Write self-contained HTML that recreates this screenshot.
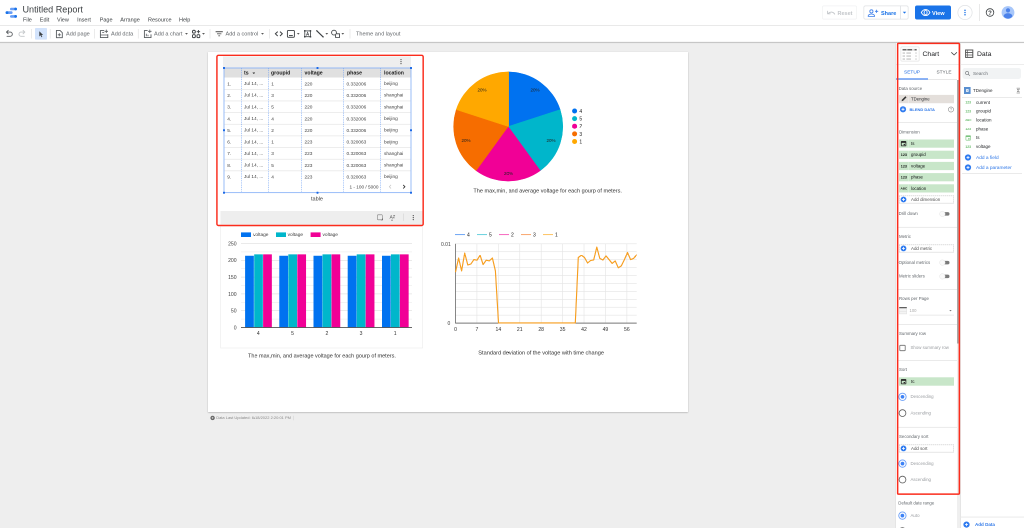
<!DOCTYPE html>
<html lang="en"><head><meta charset="utf-8"><title>Untitled Report</title>
<style>
html,body{margin:0;padding:0;}
body{width:1024px;height:528px;overflow:hidden;position:relative;background:#eeeeee;font-family:"Liberation Sans",Arial,sans-serif;}
.t{position:absolute;white-space:nowrap;line-height:20px;height:20px;}
.b{position:absolute;box-sizing:border-box;}
svg{position:absolute;overflow:visible;}
#app{position:absolute;left:0;top:0;width:2048px;height:1056px;overflow:hidden;transform:scale(0.5);transform-origin:0 0;will-change:transform;}
</style></head><body><div id="app">
<svg width="2048" height="1056" viewBox="0 0 1024 528" style="left:0;top:0">
<defs><linearGradient id="tbsh" x1="0" y1="0" x2="0" y2="1"><stop offset="0" stop-color="#b4b4b4"/><stop offset="1" stop-color="#dcdcdc"/></linearGradient><filter id="psh" x="-5%" y="-5%" width="110%" height="110%"><feGaussianBlur stdDeviation="0.8"/></filter></defs>
<rect x="0.00" y="0.00" width="1024.00" height="42.20" fill="#ffffff"/>
<rect x="0.00" y="25.20" width="1024.00" height="0.80" fill="#e4e4e4"/>
<rect x="0.00" y="41.90" width="1024.00" height="1.30" fill="url(#tbsh)"/>
<rect x="208.00" y="52.60" width="480.00" height="360.00" fill="#9a9a9a" filter="url(#psh)" opacity="0.75"/>
<rect x="208.00" y="52.00" width="480.00" height="360.00" fill="#ffffff"/>
<rect x="895.20" y="43.20" width="1.00" height="485.00" fill="#d9d9d9"/>
<rect x="895.80" y="43.20" width="64.70" height="485.00" fill="#ffffff"/>
<rect x="960.30" y="43.20" width="63.70" height="485.00" fill="#ffffff"/>
<rect x="960.20" y="43.20" width="0.80" height="485.00" fill="#dcdcdc"/>
<rect x="822.35" y="5.85" width="34.30" height="13.30" stroke="#f1f2f3" stroke-width="0.7" fill="#fff" rx="1.65"/>
<rect x="863.85" y="5.85" width="44.30" height="13.30" stroke="#dfe1e4" stroke-width="0.7" fill="#fff" rx="1.65"/>
<rect x="900.20" y="5.90" width="0.70" height="13.20" fill="#dadce0"/>
<rect x="915.00" y="5.50" width="36.00" height="14.00" fill="#1a73e8" rx="2.00"/>
<rect x="957.85" y="5.35" width="14.30" height="14.30" stroke="#e0e2e5" stroke-width="0.7" fill="#fff" rx="7.15"/>
<rect x="979.20" y="4.00" width="0.70" height="17.00" fill="#e0e0e0"/>
<g><g><rect x="10" y="7.7" width="7" height="2.6" rx="1.3" fill="#669df6"/><circle cx="15.6" cy="9" r="1.35" fill="#1a73e8"/><rect x="5.6" y="11.3" width="7" height="2.7" rx="1.35" fill="#669df6"/><circle cx="7" cy="12.65" r="1.4" fill="#1a73e8"/><rect x="10" y="15.1" width="7" height="2.6" rx="1.3" fill="#669df6"/><circle cx="15.6" cy="16.4" r="1.35" fill="#1a73e8"/></g><g fill="none" stroke="#585c60" stroke-width="0.9" stroke-linecap="round" stroke-linejoin="round"><path d="M7 36.3h3.2a2.1 2.1 0 0 0 0-4.2H6.6"/><path d="M8.2 30.4L6.5 32.1l1.7 1.7"/></g><g fill="none" stroke="#c4c7ca" stroke-width="0.9" stroke-linecap="round" stroke-linejoin="round"><path d="M24.3 36.3h-3.2a2.1 2.1 0 0 1 0-4.2h3.6"/><path d="M23.1 30.4l1.7 1.7-1.7 1.7"/></g><rect x="31.15" y="29" width="0.7" height="9.5" fill="#e3e3e3"/><rect x="49.85" y="29" width="0.7" height="9.5" fill="#e3e3e3"/><rect x="94.15" y="29" width="0.7" height="9.5" fill="#e3e3e3"/><rect x="137.95000000000002" y="29" width="0.7" height="9.5" fill="#e3e3e3"/><rect x="209.65" y="29" width="0.7" height="9.5" fill="#e3e3e3"/><rect x="269.15" y="29" width="0.7" height="9.5" fill="#e3e3e3"/><rect x="349.65" y="29" width="0.7" height="9.5" fill="#e3e3e3"/><rect x="35" y="28" width="12" height="11.6" rx="0.8" fill="#d2e3fc"/><path d="M39.3 31.2v5.3l1.3-1.2 0.9 2 0.8-0.4-0.9-1.9h1.7z" fill="#3c4043"/><g fill="none" stroke="#585c60" stroke-width="0.9" stroke-linejoin="round"><path d="M56.4 30.4h3.6l2.3 2.3v5h-5.9z"/><path d="M59.3 33.3v3M57.8 34.8h3" stroke-width="0.8"/></g><g fill="none" stroke="#585c60" stroke-width="0.9"><path d="M104.2 30.6h-3.8v7h7.4v-3.3"/><path d="M100.4 35h7.4M102.2 32.6h2" stroke-width="0.8"/><path d="M106.3 29.6v3.4M104.6 31.3h3.4" stroke-width="0.8"/></g><g fill="none" stroke="#585c60" stroke-width="0.9"><path d="M147.6 30.6h-3.2v7h6.6v-3.2"/><path d="M146.3 36.2v-2.4M148 36.2v-1.4" stroke-width="0.8"/><path d="M149.8 29.6v3.4M148.1 31.3h3.4" stroke-width="0.8"/></g><g fill="none" stroke="#3c4043" stroke-width="0.95"><circle cx="193.9" cy="31.7" r="1.45"/><rect x="192.5" y="34.7" width="2.8" height="2.9" rx="0.8"/><rect x="197" y="34.7" width="2.8" height="2.9" rx="0.8"/><path d="M198.4 30v3.4M196.7 31.7h3.4"/></g><g stroke="#5a5a5a" stroke-width="0.8"><path d="M215.6 31.7h7.2" stroke-width="1.1"/><path d="M217 33.8h4.4M218.3 35.8h1.8"/></g><path d="M185.1 33.1h2.8l-1.4 1.5z" fill="#444"/><path d="M202.1 33.1h2.8l-1.4 1.5z" fill="#444"/><path d="M261.1 33.1h2.8l-1.4 1.5z" fill="#444"/><path d="M296.90000000000003 33.1h2.8l-1.4 1.5z" fill="#444"/><path d="M325.40000000000003 33.1h2.8l-1.4 1.5z" fill="#444"/><path d="M341.40000000000003 33.1h2.8l-1.4 1.5z" fill="#444"/><g fill="none" stroke="#3c4043" stroke-width="1" stroke-linejoin="miter"><path d="M277.7 31.6l-2.3 2.2 2.3 2.2M280 31.6l2.3 2.2-2.3 2.2"/></g><g fill="none" stroke="#3c4043" stroke-width="0.9"><rect x="287.4" y="30.4" width="7" height="6.9" rx="1"/><path d="M289 35.6h3.8" stroke-width="1"/></g><g fill="none" stroke="#3c4043" stroke-width="0.8"><rect x="304.8" y="30.9" width="5.6" height="5.8"/><path d="M306.3 35.6l1.3-3.4 1.3 3.4M306.8 34.6h1.6" stroke-width="0.6"/></g><g fill="#3c4043"><rect x="304" y="30.1" width="1.5" height="1.5"/><rect x="309.7" y="30.1" width="1.5" height="1.5"/><rect x="304" y="36" width="1.5" height="1.5"/><rect x="309.7" y="36" width="1.5" height="1.5"/></g><path d="M316.8 30.8l6.2 6" stroke="#3c4043" stroke-width="1.1" fill="none"/><circle cx="316.8" cy="30.8" r="0.7" fill="#3c4043"/><circle cx="323.1" cy="36.9" r="0.7" fill="#3c4043"/><g fill="none" stroke="#3c4043" stroke-width="0.85"><circle cx="334" cy="32.6" r="2.4"/><path d="M336.3 33.8h3.2v3.7h-3.9v-2.6"/></g><g fill="none" stroke="#c3c6ca" stroke-width="0.9" stroke-linecap="round" stroke-linejoin="round"><path d="M828 13.6c2.4-2.2 5-2 6.7 0.5"/><path d="M827.6 11.2v2.6h2.6"/></g><g fill="none" stroke="#3b7de9" stroke-width="0.8" transform="translate(0 0.7)"><circle cx="871.4" cy="10.7" r="1.6"/><path d="M868.2 15.7v-0.6c0-1.2 2.1-1.8 3.2-1.8s3.2 0.6 3.2 1.8v0.6z"/><path d="M876.6 9v3.2M875 10.6h3.2"/></g><path d="M902.8 11.8h3.4l-1.7 1.8z" fill="#1a73e8"/><g fill="none" stroke="#fff" stroke-width="0.9"><path d="M921.3 12.5c1.2-2.2 2.7-3.1 4.3-3.1s3.1 0.9 4.3 3.1c-1.2 2.2-2.7 3.1-4.3 3.1s-3.1-0.9-4.3-3.1z"/><ellipse cx="925.6" cy="12.5" rx="1.5" ry="2.2"/></g><circle cx="965" cy="10.2" r="0.75" fill="#1a73e8"/><circle cx="965" cy="12.5" r="0.75" fill="#1a73e8"/><circle cx="965" cy="14.8" r="0.75" fill="#1a73e8"/><circle cx="990" cy="12.5" r="3.8" fill="none" stroke="#3c4043" stroke-width="0.8"/><circle cx="1008" cy="12.5" r="6.4" fill="#a8c7fa"/><circle cx="1008" cy="10.4" r="2.1" fill="#4c82ea"/><path d="M1003.6 16.2c0-2 2.6-2.9 4.4-2.9s4.4 0.9 4.4 2.9c-1 1.6-2.6 2.4-4.4 2.4s-3.4-0.8-4.4-2.4z" fill="#4c82ea"/></g>
<rect x="223.00" y="56.40" width="188.00" height="11.40" fill="#eeeeee"/>
<rect x="224.30" y="68.20" width="186.40" height="9.30" fill="#e0e0e0"/>
<rect x="220.50" y="211.00" width="202.20" height="13.80" fill="#eeeeee"/>
<g><circle cx="401" cy="59.6" r="0.6" fill="#555"/><circle cx="401" cy="61.6" r="0.6" fill="#555"/><circle cx="401" cy="63.6" r="0.6" fill="#555"/><path d="M252.4 72.5h2.6l-1.3 1.5z" fill="#333"/><rect x="224.5" y="89.00" width="186" height="0.6" fill="#e2e2e2"/><rect x="224.5" y="100.65" width="186" height="0.6" fill="#e2e2e2"/><rect x="224.5" y="112.30" width="186" height="0.6" fill="#e2e2e2"/><rect x="224.5" y="123.95" width="186" height="0.6" fill="#e2e2e2"/><rect x="224.5" y="135.60" width="186" height="0.6" fill="#e2e2e2"/><rect x="224.5" y="147.25" width="186" height="0.6" fill="#e2e2e2"/><rect x="224.5" y="158.90" width="186" height="0.6" fill="#e2e2e2"/><rect x="224.5" y="170.55" width="186" height="0.6" fill="#e2e2e2"/><path d="M241.5 68.3V192.5" stroke="#5b95f5" stroke-width="0.55" stroke-dasharray="0.9 0.9" fill="none"/><path d="M268.5 68.3V192.5" stroke="#5b95f5" stroke-width="0.55" stroke-dasharray="0.9 0.9" fill="none"/><path d="M301.5 68.3V192.5" stroke="#5b95f5" stroke-width="0.55" stroke-dasharray="0.9 0.9" fill="none"/><path d="M343.5 68.3V192.5" stroke="#5b95f5" stroke-width="0.55" stroke-dasharray="0.9 0.9" fill="none"/><path d="M380.5 68.3V192.5" stroke="#5b95f5" stroke-width="0.55" stroke-dasharray="0.9 0.9" fill="none"/><rect x="224" y="68" width="187" height="124.7" fill="none" stroke="#6ea1f6" stroke-width="0.7"/><rect x="223" y="67" width="2" height="2" rx="0.4" fill="#1a68e5"/><rect x="316.5" y="67" width="2" height="2" rx="0.4" fill="#1a68e5"/><rect x="410" y="67" width="2" height="2" rx="0.4" fill="#1a68e5"/><rect x="223" y="129.3" width="2" height="2" rx="0.4" fill="#1a68e5"/><rect x="410" y="129.3" width="2" height="2" rx="0.4" fill="#1a68e5"/><rect x="223" y="191.7" width="2" height="2" rx="0.4" fill="#1a68e5"/><rect x="316.5" y="191.7" width="2" height="2" rx="0.4" fill="#1a68e5"/><rect x="410" y="191.7" width="2" height="2" rx="0.4" fill="#1a68e5"/><path d="M391 184.9l-1.6 1.8 1.6 1.8" fill="none" stroke="#c4c4c4" stroke-width="0.7"/><path d="M403.2 184.9l1.7 1.8-1.7 1.8" fill="none" stroke="#333" stroke-width="0.9"/><g fill="none" stroke="#7a7a7a" stroke-width="0.55"><rect x="377.3" y="214.8" width="5" height="5" rx="0.8"/></g><path d="M382.8 218.2v2h-2z" fill="#555"/><g fill="none" stroke="#6a6a6a" stroke-width="0.5"><path d="M389.8 218.8l1.4-3.6 1.4 3.6M390.3 217.7h1.8"/><path d="M393 215.3h1.9l-1.9 2.6h1.9"/><path d="M392 219.2v1.6M391.3 220.2l0.7 0.7 0.7-0.7"/></g><rect x="403" y="213.6" width="0.6" height="7.2" fill="#d4d4d4"/><circle cx="413.3" cy="215.6" r="0.6" fill="#555"/><circle cx="413.3" cy="217.6" r="0.6" fill="#555"/><circle cx="413.3" cy="219.6" r="0.6" fill="#555"/><rect x="220.7" y="226" width="201.8" height="122" fill="none" stroke="#ebebeb" stroke-width="0.6"/><rect x="241" y="232.4" width="10" height="4.6" fill="#0072f0"/><rect x="276" y="232.4" width="10" height="4.6" fill="#00b6cb"/><rect x="310.6" y="232.4" width="10" height="4.6" fill="#f10096"/><rect x="241" y="243.20" width="171" height="0.6" fill="#dcdcdc"/><rect x="241" y="251.60" width="171" height="0.6" fill="#ececec"/><rect x="241" y="260.00" width="171" height="0.6" fill="#dcdcdc"/><rect x="241" y="268.40" width="171" height="0.6" fill="#ececec"/><rect x="241" y="276.80" width="171" height="0.6" fill="#dcdcdc"/><rect x="241" y="285.20" width="171" height="0.6" fill="#ececec"/><rect x="241" y="293.60" width="171" height="0.6" fill="#dcdcdc"/><rect x="241" y="302.00" width="171" height="0.6" fill="#ececec"/><rect x="241" y="310.40" width="171" height="0.6" fill="#dcdcdc"/><rect x="241" y="318.80" width="171" height="0.6" fill="#ececec"/><rect x="245.10" y="255.76" width="8.75" height="71.74" fill="#0072f0"/><rect x="254.10" y="254.18" width="8.75" height="73.32" fill="#00b6cb"/><rect x="263.10" y="254.18" width="8.75" height="73.32" fill="#f10096"/><rect x="279.30" y="255.76" width="8.75" height="71.74" fill="#0072f0"/><rect x="288.30" y="254.18" width="8.75" height="73.32" fill="#00b6cb"/><rect x="297.30" y="254.18" width="8.75" height="73.32" fill="#f10096"/><rect x="313.50" y="255.76" width="8.75" height="71.74" fill="#0072f0"/><rect x="322.50" y="254.18" width="8.75" height="73.32" fill="#00b6cb"/><rect x="331.50" y="254.18" width="8.75" height="73.32" fill="#f10096"/><rect x="347.70" y="255.76" width="8.75" height="71.74" fill="#0072f0"/><rect x="356.70" y="254.18" width="8.75" height="73.32" fill="#00b6cb"/><rect x="365.70" y="254.18" width="8.75" height="73.32" fill="#f10096"/><rect x="381.90" y="255.76" width="8.75" height="71.74" fill="#0072f0"/><rect x="390.90" y="254.18" width="8.75" height="73.32" fill="#00b6cb"/><rect x="399.90" y="254.18" width="8.75" height="73.32" fill="#f10096"/><rect x="241" y="327.1" width="171" height="0.8" fill="#444"/><path d="M508.2 126.5L508.20 71.90A54.6 54.6 0 0 1 560.13 109.63Z" fill="#0072f0" stroke="#0072f0" stroke-width="0.5"/><path d="M508.2 126.5L560.13 109.63A54.6 54.6 0 0 1 540.29 170.67Z" fill="#00b6cb" stroke="#00b6cb" stroke-width="0.5"/><path d="M508.2 126.5L540.29 170.67A54.6 54.6 0 0 1 476.11 170.67Z" fill="#f10096" stroke="#f10096" stroke-width="0.5"/><path d="M508.2 126.5L476.11 170.67A54.6 54.6 0 0 1 456.27 109.63Z" fill="#f66d00" stroke="#f66d00" stroke-width="0.5"/><path d="M508.2 126.5L456.27 109.63A54.6 54.6 0 0 1 508.20 71.90Z" fill="#ffa800" stroke="#ffa800" stroke-width="0.5"/><circle cx="574.6" cy="111" r="2.5" fill="#0072f0"/><circle cx="574.6" cy="118.6" r="2.5" fill="#00b6cb"/><circle cx="574.6" cy="126.2" r="2.5" fill="#f10096"/><circle cx="574.6" cy="133.9" r="2.5" fill="#f66d00"/><circle cx="574.6" cy="141.5" r="2.5" fill="#ffa800"/><rect x="455.5" y="243.50" width="181.2" height="0.6" fill="#e4e4e4"/><rect x="455.5" y="251.43" width="181.2" height="0.6" fill="#e4e4e4"/><rect x="455.5" y="259.36" width="181.2" height="0.6" fill="#e4e4e4"/><rect x="455.5" y="267.29" width="181.2" height="0.6" fill="#e4e4e4"/><rect x="455.5" y="275.22" width="181.2" height="0.6" fill="#e4e4e4"/><rect x="455.5" y="283.15" width="181.2" height="0.6" fill="#e4e4e4"/><rect x="455.5" y="291.08" width="181.2" height="0.6" fill="#e4e4e4"/><rect x="455.5" y="299.01" width="181.2" height="0.6" fill="#e4e4e4"/><rect x="455.5" y="306.94" width="181.2" height="0.6" fill="#e4e4e4"/><rect x="455.5" y="314.87" width="181.2" height="0.6" fill="#e4e4e4"/><rect x="476.62" y="243.8" width="0.6" height="79.3" fill="#e4e4e4"/><rect x="498.04" y="243.8" width="0.6" height="79.3" fill="#e4e4e4"/><rect x="519.46" y="243.8" width="0.6" height="79.3" fill="#e4e4e4"/><rect x="540.88" y="243.8" width="0.6" height="79.3" fill="#e4e4e4"/><rect x="562.30" y="243.8" width="0.6" height="79.3" fill="#e4e4e4"/><rect x="583.72" y="243.8" width="0.6" height="79.3" fill="#e4e4e4"/><rect x="605.14" y="243.8" width="0.6" height="79.3" fill="#e4e4e4"/><rect x="626.56" y="243.8" width="0.6" height="79.3" fill="#e4e4e4"/><rect x="455.1" y="243.8" width="0.8" height="79.7" fill="#6a6a6a"/><rect x="455.5" y="322.70000000000005" width="181.2" height="0.8" fill="#555"/><polyline points="455.5,272.1 458.6,258.0 461.6,270.9 464.7,253.1 467.8,265.0 470.9,264.0 473.9,259.6 477.0,260.2 480.1,255.2 483.1,264.6 486.2,260.2 489.3,260.9 492.4,258.0 495.4,270.9 498.5,322.9 501.6,322.9 504.6,322.9 507.7,322.9 510.8,322.9 513.9,322.9 516.9,322.9 520.0,322.9 523.1,322.9 526.1,322.9 529.2,322.9 532.3,322.9 535.4,322.9 538.4,322.9 541.5,322.9 544.6,322.9 547.6,322.9 550.7,322.9 553.8,322.9 556.8,322.9 559.9,322.9 563.0,322.9 566.1,322.9 569.1,322.9 572.2,322.9 575.3,322.9 578.3,257.5 581.4,255.2 584.5,257.5 587.6,263.0 590.6,260.5 593.7,259.9 596.8,247.1 599.8,258.4 602.9,260.0 606.0,255.9 609.1,259.6 612.1,263.4 615.2,260.9 618.3,267.8 621.3,265.9 624.4,259.6 627.5,252.5 630.6,259.6 633.6,258.4 636.7,254.4" fill="none" stroke="#f08a1c" stroke-width="1.1" stroke-linejoin="round"/><polyline points="455.5,272.1 458.6,258.0 461.6,270.9 464.7,253.1 467.8,265.0 470.9,264.0 473.9,259.6 477.0,260.2 480.1,255.2 483.1,264.6 486.2,260.2 489.3,260.9 492.4,258.0 495.4,270.9 498.5,322.9 501.6,322.9 504.6,322.9 507.7,322.9 510.8,322.9 513.9,322.9 516.9,322.9 520.0,322.9 523.1,322.9 526.1,322.9 529.2,322.9 532.3,322.9 535.4,322.9 538.4,322.9 541.5,322.9 544.6,322.9 547.6,322.9 550.7,322.9 553.8,322.9 556.8,322.9 559.9,322.9 563.0,322.9 566.1,322.9 569.1,322.9 572.2,322.9 575.3,322.9 578.3,257.5 581.4,255.2 584.5,257.5 587.6,263.0 590.6,260.5 593.7,259.9 596.8,247.1 599.8,258.4 602.9,260.0 606.0,255.9 609.1,259.6 612.1,263.4 615.2,260.9 618.3,267.8 621.3,265.9 624.4,259.6 627.5,252.5 630.6,259.6 633.6,258.4 636.7,254.4" fill="none" stroke="#fbab1e" stroke-width="0.6" stroke-linejoin="round"/><rect x="455" y="234.25" width="10" height="0.8" fill="#4a90f2"/><rect x="477" y="234.25" width="10" height="0.8" fill="#45c6d6"/><rect x="499" y="234.25" width="10" height="0.8" fill="#f545b0"/><rect x="521" y="234.25" width="10" height="0.8" fill="#f8914a"/><rect x="543" y="234.25" width="10" height="0.8" fill="#fdb53c"/><circle cx="212.6" cy="417.9" r="2.2" fill="#666"/><path d="M211.6 417.9h2M212.6 416.9v2" stroke="#eee" stroke-width="0.5"/><rect x="293.3" y="415.8" width="0.5" height="4.4" fill="#d0d0d0"/></g>
<rect x="216.92" y="55.33" width="206.25" height="170.15" stroke="#fb2c1c" stroke-width="1.45" fill="none" rx="1.48"/>
<rect x="896.00" y="64.10" width="128.00" height="0.70" fill="#e6e6e6"/>
<rect x="896.00" y="79.20" width="61.00" height="0.70" fill="#dedede"/>
<rect x="896.00" y="78.30" width="32.00" height="1.35" fill="#5a93f5"/>
<rect x="957.00" y="80.00" width="3.40" height="448.00" fill="#efefef"/>
<rect x="957.00" y="80.00" width="1.70" height="263.50" fill="#a8a8a8"/>
<rect x="900.85" y="46.85" width="18.30" height="14.30" stroke="#e4e4e4" stroke-width="0.7" fill="#fff" rx="1.15"/>
<rect x="899.00" y="94.90" width="55.00" height="8.30" fill="#e4dfdb"/>
<rect x="908.30" y="94.90" width="0.50" height="8.30" fill="#f3f0ee"/>
<rect x="898.30" y="122.15" width="58.70" height="0.70" fill="#e2e2e2"/>
<rect x="898.30" y="226.95" width="58.70" height="0.70" fill="#e2e2e2"/>
<rect x="898.30" y="289.15" width="58.70" height="0.70" fill="#e2e2e2"/>
<rect x="898.30" y="324.15" width="58.70" height="0.70" fill="#e2e2e2"/>
<rect x="898.30" y="360.15" width="58.70" height="0.70" fill="#e2e2e2"/>
<rect x="898.30" y="426.95" width="58.70" height="0.70" fill="#e2e2e2"/>
<rect x="899.00" y="139.50" width="55.00" height="8.20" fill="#c8e6c9"/>
<rect x="908.30" y="139.50" width="0.50" height="8.20" fill="#dff0e0"/>
<rect x="899.00" y="150.70" width="55.00" height="8.20" fill="#c8e6c9"/>
<rect x="908.30" y="150.70" width="0.50" height="8.20" fill="#dff0e0"/>
<rect x="899.00" y="161.90" width="55.00" height="8.20" fill="#c8e6c9"/>
<rect x="908.30" y="161.90" width="0.50" height="8.20" fill="#dff0e0"/>
<rect x="899.00" y="173.10" width="55.00" height="8.20" fill="#c8e6c9"/>
<rect x="908.30" y="173.10" width="0.50" height="8.20" fill="#dff0e0"/>
<rect x="899.00" y="184.30" width="55.00" height="8.20" fill="#c8e6c9"/>
<rect x="908.30" y="184.30" width="0.50" height="8.20" fill="#dff0e0"/>
<rect x="899.30" y="195.80" width="54.40" height="7.40" stroke="#b0b0b0" stroke-width="0.6" stroke-dasharray="1 1" fill="#fff"/>
<rect x="899.30" y="244.80" width="54.40" height="7.40" stroke="#b0b0b0" stroke-width="0.6" stroke-dasharray="1 1" fill="#fff"/>
<rect x="899.30" y="444.80" width="54.40" height="7.40" stroke="#b0b0b0" stroke-width="0.6" stroke-dasharray="1 1" fill="#fff"/>
<rect x="909.50" y="314.80" width="44.50" height="0.60" fill="#dcdcdc"/>
<rect x="899.80" y="345.30" width="5.40" height="5.40" stroke="#6e6e6e" stroke-width="0.8" fill="#fff" rx="0.60"/>
<rect x="899.00" y="377.30" width="55.00" height="8.40" fill="#c8e6c9"/>
<rect x="962.50" y="68.00" width="58.50" height="11.00" fill="#f1f3f4" rx="2.50"/>
<rect x="962.00" y="97.20" width="60.00" height="0.70" fill="#e2e2e2"/>
<rect x="962.00" y="173.20" width="60.00" height="0.70" fill="#e2e2e2"/>
<rect x="960.60" y="516.70" width="63.40" height="0.70" fill="#e2e2e2"/>
<g><rect x="902.3" y="48.8" width="14.6" height="1.9" fill="#dcdcdc"/><rect x="902.6" y="49.1" width="3.8" height="1.3" fill="#5a5a5a"/><rect x="907.4" y="49.1" width="4.6" height="1.3" fill="#5a5a5a"/><rect x="914.6" y="49.1" width="2.0" height="1.3" fill="#5a5a5a"/><rect x="902.6" y="52.5" width="2.4" height="1.1" fill="#bdbdbd"/><rect x="906.4" y="52.5" width="4.6" height="1.1" fill="#bdbdbd"/><rect x="915.4" y="52.5" width="1.2" height="1.1" fill="#bdbdbd"/><rect x="902.6" y="55.5" width="2.4" height="1.1" fill="#bdbdbd"/><rect x="906.4" y="55.5" width="4.6" height="1.1" fill="#bdbdbd"/><rect x="915.4" y="55.5" width="1.2" height="1.1" fill="#bdbdbd"/><rect x="902.6" y="58.5" width="2.4" height="1.1" fill="#bdbdbd"/><rect x="906.4" y="58.5" width="4.6" height="1.1" fill="#bdbdbd"/><rect x="915.4" y="58.5" width="1.2" height="1.1" fill="#bdbdbd"/><path d="M951.3 52.3l2.8 2.7 2.8-2.7" fill="none" stroke="#444" stroke-width="0.8"/><g fill="none" stroke="#555" stroke-width="1"><rect x="965.6" y="50" width="7.2" height="7.4"/><path d="M965.6 52.6h7.2M965.6 55h7.2" stroke-width="0.85"/><path d="M967.5 50v7.4" stroke-width="0.6"/></g><path d="M901.6 101.2l0.3-1.4 3.5-3.5 1.1 1.1-3.5 3.5z" fill="#333"/><circle cx="903" cy="109.3" r="3.1" fill="#2f7bf0"/><path d="M901.5 109.3h3M903 107.8v3" stroke="#fff" stroke-width="0.8"/><circle cx="903.5" cy="199.5" r="2.9" fill="#2f7bf0"/><path d="M902.0 199.5h3M903.5 198.0v3" stroke="#fff" stroke-width="0.8"/><circle cx="903.5" cy="248.4" r="2.9" fill="#2f7bf0"/><path d="M902.0 248.4h3M903.5 246.9v3" stroke="#fff" stroke-width="0.8"/><circle cx="903.5" cy="448.4" r="2.9" fill="#2f7bf0"/><path d="M902.0 448.4h3M903.5 446.9v3" stroke="#fff" stroke-width="0.8"/><circle cx="968" cy="157.5" r="3.1" fill="#2f7bf0"/><path d="M966.5 157.5h3M968 156.0v3" stroke="#fff" stroke-width="0.8"/><circle cx="968" cy="167.5" r="3.1" fill="#2f7bf0"/><path d="M966.5 167.5h3M968 166.0v3" stroke="#fff" stroke-width="0.8"/><circle cx="966.5" cy="524.6" r="3.1" fill="#2f7bf0"/><path d="M965.0 524.6h3M966.5 523.1v3" stroke="#fff" stroke-width="0.8"/><circle cx="951" cy="109.5" r="2.6" fill="none" stroke="#8a8a8a" stroke-width="0.6"/><path d="M950.3 108.8c0-1 1.5-1 1.5 0 0 0.6-0.8 0.6-0.8 1.3M951 110.7v0.5" fill="none" stroke="#8a8a8a" stroke-width="0.45"/><g fill="none" stroke="#2a2a2a" stroke-width="0.8"><rect x="901.3" y="141.4" width="4.6" height="4.5" rx="0.4"/><path d="M901.3 142.20000000000002h4.6" stroke-width="1.3"/></g><rect x="903.5999999999999" y="143.9" width="1.4" height="1.3" fill="#2a2a2a"/><g fill="none" stroke="#2a2a2a" stroke-width="0.8"><rect x="901.3" y="379.4" width="4.6" height="4.5" rx="0.4"/><path d="M901.3 380.2h4.6" stroke-width="1.3"/></g><rect x="903.5999999999999" y="381.9" width="1.4" height="1.3" fill="#2a2a2a"/><g fill="none" stroke="#7ac47e" stroke-width="0.6"><rect x="965.9" y="135.7" width="4.6" height="4.5" rx="0.4"/><path d="M965.9 136.5h4.6" stroke-width="1.1"/></g><rect x="968.1999999999999" y="138.2" width="1.4" height="1.3" fill="#7ac47e"/><rect x="941.5" y="212.15" width="8" height="3.5" rx="1.75" fill="#7a7a7a"/><circle cx="942.4" cy="213.9" r="2.75" fill="#fafafa" stroke="#dedede" stroke-width="0.4"/><rect x="941.5" y="260.85" width="8" height="3.5" rx="1.75" fill="#7a7a7a"/><circle cx="942.4" cy="262.6" r="2.75" fill="#fafafa" stroke="#dedede" stroke-width="0.4"/><rect x="941.5" y="274.65" width="8" height="3.5" rx="1.75" fill="#7a7a7a"/><circle cx="942.4" cy="276.4" r="2.75" fill="#fafafa" stroke="#dedede" stroke-width="0.4"/><rect x="899.2" y="307" width="7.6" height="1.3" fill="#5f5f5f"/><rect x="899.4" y="308.6" width="7.2" height="5.3" fill="#f4f4f4" stroke="#dcdcdc" stroke-width="0.5"/><path d="M899.4 311.2h7.2" stroke="#dcdcdc" stroke-width="0.5"/><path d="M949.3 310h2.4l-1.2 1.4z" fill="#777"/><circle cx="902.5" cy="396.8" r="3.65" fill="#fff" stroke="#6a9ff8" stroke-width="0.9"/><circle cx="902.5" cy="396.8" r="1.85" fill="#3d82f6"/><circle cx="902.5" cy="413.1" r="3.4" fill="#fff" stroke="#5c5c5c" stroke-width="0.8"/><circle cx="902.5" cy="463.6" r="3.65" fill="#fff" stroke="#6a9ff8" stroke-width="0.9"/><circle cx="902.5" cy="463.6" r="1.85" fill="#3d82f6"/><circle cx="902.5" cy="479.6" r="3.4" fill="#fff" stroke="#5c5c5c" stroke-width="0.8"/><circle cx="902.4" cy="515.6" r="3.65" fill="#fff" stroke="#6a9ff8" stroke-width="0.9"/><circle cx="902.4" cy="515.6" r="1.85" fill="#3d82f6"/><circle cx="902.4" cy="531" r="3.4" fill="#fff" stroke="#5c5c5c" stroke-width="0.8"/><circle cx="967.1" cy="73" r="1.6" fill="none" stroke="#6f7377" stroke-width="0.6"/><path d="M968.3 74.2l1.6 1.6" stroke="#6f7377" stroke-width="0.65"/><rect x="964" y="87" width="6.6" height="7" fill="#5a8fd0"/><rect x="966" y="89.2" width="2.6" height="2.6" fill="#fff"/><path d="M966.8 89.9l1.2 0.6-1.2 0.6z" fill="#5a8fd0"/><g fill="none" stroke="#666" stroke-width="0.55"><path d="M1016.3 88.1h3.6M1016.3 93h3.6M1016.7 89l1.4 1.2 1.4-1.2M1016.7 92.1l1.4-1.2 1.4 1.2"/></g></g>
<rect x="897.65" y="43.35" width="61.70" height="450.80" stroke="#fb2c1c" stroke-width="1.5" fill="none" rx="0.85"/>
</svg>
<div class="t" style="left:45.00px;top:9px;font-size:18.14px;color:#3c4043;">Untitled Report</div>
<div class="t" style="left:46.00px;top:29px;font-size:11.00px;color:#3c4043;">File</div>
<div class="t" style="left:79.60px;top:29px;font-size:11.00px;color:#3c4043;">Edit</div>
<div class="t" style="left:114.00px;top:29px;font-size:11.00px;color:#3c4043;">View</div>
<div class="t" style="left:154.20px;top:29px;font-size:11.00px;color:#3c4043;">Insert</div>
<div class="t" style="left:199.40px;top:29px;font-size:11.00px;color:#3c4043;">Page</div>
<div class="t" style="left:240.40px;top:29px;font-size:11.00px;color:#3c4043;">Arrange</div>
<div class="t" style="left:296.00px;top:29px;font-size:11.00px;color:#3c4043;">Resource</div>
<div class="t" style="left:358.00px;top:29px;font-size:11.00px;color:#3c4043;">Help</div>
<div class="t" style="left:132.00px;top:57px;font-size:11.10px;color:#63676b;">Add page</div>
<div class="t" style="left:222.00px;top:57px;font-size:11.10px;color:#63676b;">Add data</div>
<div class="t" style="left:308.00px;top:57px;font-size:11.10px;color:#63676b;">Add a chart</div>
<div class="t" style="left:451.00px;top:57px;font-size:11.10px;color:#63676b;">Add a control</div>
<div class="t" style="left:712.00px;top:57px;font-size:11.10px;color:#63676b;">Theme and layout</div>
<div class="t" style="left:1675.00px;top:16px;font-size:11.00px;color:#c3c6ca;font-weight:bold;">Reset</div>
<div class="t" style="left:1762.00px;top:16px;font-size:11.00px;color:#1a73e8;font-weight:bold;">Share</div>
<div class="t" style="left:1864.00px;top:16px;font-size:11.20px;color:#ffffff;font-weight:bold;">View</div>
<div class="t" style="left:1880.00px;width:200px;text-align:center;top:16px;font-size:12.00px;color:#3c4043;font-weight:bold;">?</div>
<div class="t" style="left:488.00px;top:136px;font-size:10.40px;color:#212121;font-weight:bold;">ts</div>
<div class="t" style="left:542.00px;top:136px;font-size:10.40px;color:#212121;font-weight:bold;">groupid</div>
<div class="t" style="left:609.00px;top:136px;font-size:10.40px;color:#212121;font-weight:bold;">voltage</div>
<div class="t" style="left:694.00px;top:136px;font-size:10.40px;color:#212121;font-weight:bold;">phase</div>
<div class="t" style="left:768.00px;top:136px;font-size:10.40px;color:#212121;font-weight:bold;">location</div>
<div class="t" style="left:454.60px;top:158px;font-size:9.50px;color:#454545;">1.</div>
<div class="t" style="left:488.00px;top:157px;font-size:9.50px;color:#454545;">Jul 14, ...</div>
<div class="t" style="left:542.40px;top:158px;font-size:9.50px;color:#454545;">1</div>
<div class="t" style="left:609.00px;top:158px;font-size:9.50px;color:#454545;">220</div>
<div class="t" style="left:693.00px;top:158px;font-size:9.50px;color:#454545;">0.332006</div>
<div class="t" style="left:768.00px;top:157px;font-size:9.50px;color:#454545;">beijing</div>
<div class="t" style="left:454.60px;top:181px;font-size:9.50px;color:#454545;">2.</div>
<div class="t" style="left:488.00px;top:180px;font-size:9.50px;color:#454545;">Jul 14, ...</div>
<div class="t" style="left:542.40px;top:181px;font-size:9.50px;color:#454545;">3</div>
<div class="t" style="left:609.00px;top:181px;font-size:9.50px;color:#454545;">220</div>
<div class="t" style="left:693.00px;top:181px;font-size:9.50px;color:#454545;">0.332006</div>
<div class="t" style="left:768.00px;top:180px;font-size:9.50px;color:#454545;">shanghai</div>
<div class="t" style="left:454.60px;top:204px;font-size:9.50px;color:#454545;">3.</div>
<div class="t" style="left:488.00px;top:204px;font-size:9.50px;color:#454545;">Jul 14, ...</div>
<div class="t" style="left:542.40px;top:204px;font-size:9.50px;color:#454545;">5</div>
<div class="t" style="left:609.00px;top:204px;font-size:9.50px;color:#454545;">220</div>
<div class="t" style="left:693.00px;top:204px;font-size:9.50px;color:#454545;">0.332006</div>
<div class="t" style="left:768.00px;top:204px;font-size:9.50px;color:#454545;">shanghai</div>
<div class="t" style="left:454.60px;top:228px;font-size:9.50px;color:#454545;">4.</div>
<div class="t" style="left:488.00px;top:227px;font-size:9.50px;color:#454545;">Jul 14, ...</div>
<div class="t" style="left:542.40px;top:228px;font-size:9.50px;color:#454545;">4</div>
<div class="t" style="left:609.00px;top:228px;font-size:9.50px;color:#454545;">220</div>
<div class="t" style="left:693.00px;top:228px;font-size:9.50px;color:#454545;">0.332006</div>
<div class="t" style="left:768.00px;top:227px;font-size:9.50px;color:#454545;">beijing</div>
<div class="t" style="left:454.60px;top:251px;font-size:9.50px;color:#454545;">5.</div>
<div class="t" style="left:488.00px;top:250px;font-size:9.50px;color:#454545;">Jul 14, ...</div>
<div class="t" style="left:542.40px;top:251px;font-size:9.50px;color:#454545;">2</div>
<div class="t" style="left:609.00px;top:251px;font-size:9.50px;color:#454545;">220</div>
<div class="t" style="left:693.00px;top:251px;font-size:9.50px;color:#454545;">0.332006</div>
<div class="t" style="left:768.00px;top:250px;font-size:9.50px;color:#454545;">beijing</div>
<div class="t" style="left:454.60px;top:274px;font-size:9.50px;color:#454545;">6.</div>
<div class="t" style="left:488.00px;top:274px;font-size:9.50px;color:#454545;">Jul 14, ...</div>
<div class="t" style="left:542.40px;top:274px;font-size:9.50px;color:#454545;">1</div>
<div class="t" style="left:609.00px;top:274px;font-size:9.50px;color:#454545;">223</div>
<div class="t" style="left:693.00px;top:274px;font-size:9.50px;color:#454545;">0.320063</div>
<div class="t" style="left:768.00px;top:274px;font-size:9.50px;color:#454545;">beijing</div>
<div class="t" style="left:454.60px;top:297px;font-size:9.50px;color:#454545;">7.</div>
<div class="t" style="left:488.00px;top:297px;font-size:9.50px;color:#454545;">Jul 14, ...</div>
<div class="t" style="left:542.40px;top:297px;font-size:9.50px;color:#454545;">3</div>
<div class="t" style="left:609.00px;top:297px;font-size:9.50px;color:#454545;">223</div>
<div class="t" style="left:693.00px;top:297px;font-size:9.50px;color:#454545;">0.320063</div>
<div class="t" style="left:768.00px;top:297px;font-size:9.50px;color:#454545;">shanghai</div>
<div class="t" style="left:454.60px;top:321px;font-size:9.50px;color:#454545;">8.</div>
<div class="t" style="left:488.00px;top:320px;font-size:9.50px;color:#454545;">Jul 14, ...</div>
<div class="t" style="left:542.40px;top:321px;font-size:9.50px;color:#454545;">5</div>
<div class="t" style="left:609.00px;top:321px;font-size:9.50px;color:#454545;">223</div>
<div class="t" style="left:693.00px;top:321px;font-size:9.50px;color:#454545;">0.320063</div>
<div class="t" style="left:768.00px;top:320px;font-size:9.50px;color:#454545;">shanghai</div>
<div class="t" style="left:454.60px;top:344px;font-size:9.50px;color:#454545;">9.</div>
<div class="t" style="left:488.00px;top:343px;font-size:9.50px;color:#454545;">Jul 14, ...</div>
<div class="t" style="left:542.40px;top:344px;font-size:9.50px;color:#454545;">4</div>
<div class="t" style="left:609.00px;top:344px;font-size:9.50px;color:#454545;">223</div>
<div class="t" style="left:693.00px;top:344px;font-size:9.50px;color:#454545;">0.320063</div>
<div class="t" style="left:768.00px;top:343px;font-size:9.50px;color:#454545;">beijing</div>
<div class="t" style="left:699.00px;top:364px;font-size:9.40px;color:#454545;">1 - 100 / 5000</div>
<div class="t" style="left:622.00px;top:387px;font-size:11.07px;color:#404040;">table</div>
<div class="t" style="left:506.00px;top:459px;font-size:9.61px;color:#404040;">voltage</div>
<div class="t" style="left:575.20px;top:459px;font-size:9.61px;color:#404040;">voltage</div>
<div class="t" style="left:645.00px;top:459px;font-size:9.61px;color:#404040;">voltage</div>
<div class="t" style="left:273.20px;width:200px;text-align:right;top:478px;font-size:10.20px;color:#404040;">250</div>
<div class="t" style="left:273.20px;width:200px;text-align:right;top:511px;font-size:10.20px;color:#404040;">200</div>
<div class="t" style="left:273.20px;width:200px;text-align:right;top:545px;font-size:10.20px;color:#404040;">150</div>
<div class="t" style="left:273.20px;width:200px;text-align:right;top:579px;font-size:10.20px;color:#404040;">100</div>
<div class="t" style="left:273.20px;width:200px;text-align:right;top:612px;font-size:10.20px;color:#404040;">50</div>
<div class="t" style="left:273.20px;width:200px;text-align:right;top:646px;font-size:10.20px;color:#404040;">0</div>
<div class="t" style="left:416.60px;width:200px;text-align:center;top:657px;font-size:10.20px;color:#303030;">4</div>
<div class="t" style="left:485.20px;width:200px;text-align:center;top:657px;font-size:10.20px;color:#303030;">5</div>
<div class="t" style="left:553.80px;width:200px;text-align:center;top:657px;font-size:10.20px;color:#303030;">2</div>
<div class="t" style="left:622.00px;width:200px;text-align:center;top:657px;font-size:10.20px;color:#303030;">3</div>
<div class="t" style="left:690.40px;width:200px;text-align:center;top:657px;font-size:10.20px;color:#303030;">1</div>
<div class="t" style="left:496.00px;top:701px;font-size:11.03px;color:#303030;">The max,min, and average voltage for each gourp of meters.</div>
<div class="t" style="left:955.00px;top:170px;font-size:9.00px;color:#222;">20%</div>
<div class="t" style="left:1061.00px;top:170px;font-size:9.00px;color:#222;">20%</div>
<div class="t" style="left:1093.00px;top:271px;font-size:9.00px;color:#222;">20%</div>
<div class="t" style="left:1008.00px;top:337px;font-size:9.00px;color:#222;">20%</div>
<div class="t" style="left:923.00px;top:271px;font-size:9.00px;color:#222;">20%</div>
<div class="t" style="left:1158.80px;top:213px;font-size:10.00px;color:#202020;">4</div>
<div class="t" style="left:1158.80px;top:228px;font-size:10.00px;color:#202020;">5</div>
<div class="t" style="left:1158.80px;top:243px;font-size:10.00px;color:#202020;">2</div>
<div class="t" style="left:1158.80px;top:259px;font-size:10.00px;color:#202020;">3</div>
<div class="t" style="left:1158.80px;top:274px;font-size:10.00px;color:#202020;">1</div>
<div class="t" style="left:946.80px;top:371px;font-size:11.07px;color:#303030;">The max,min, and average voltage for each gourp of meters.</div>
<div class="t" style="left:934.00px;top:460px;font-size:10.00px;color:#202020;">4</div>
<div class="t" style="left:978.00px;top:460px;font-size:10.00px;color:#202020;">5</div>
<div class="t" style="left:1022.00px;top:460px;font-size:10.00px;color:#202020;">2</div>
<div class="t" style="left:1066.00px;top:460px;font-size:10.00px;color:#202020;">3</div>
<div class="t" style="left:1110.00px;top:460px;font-size:10.00px;color:#202020;">1</div>
<div class="t" style="left:882.00px;top:479px;font-size:10.00px;color:#404040;">0.01</div>
<div class="t" style="left:700.60px;width:200px;text-align:right;top:637px;font-size:10.00px;color:#404040;">0</div>
<div class="t" style="left:811.00px;width:200px;text-align:center;top:649px;font-size:10.20px;color:#303030;">0</div>
<div class="t" style="left:853.84px;width:200px;text-align:center;top:649px;font-size:10.20px;color:#303030;">7</div>
<div class="t" style="left:896.68px;width:200px;text-align:center;top:649px;font-size:10.20px;color:#303030;">14</div>
<div class="t" style="left:939.52px;width:200px;text-align:center;top:649px;font-size:10.20px;color:#303030;">21</div>
<div class="t" style="left:982.36px;width:200px;text-align:center;top:649px;font-size:10.20px;color:#303030;">28</div>
<div class="t" style="left:1025.20px;width:200px;text-align:center;top:649px;font-size:10.20px;color:#303030;">35</div>
<div class="t" style="left:1068.04px;width:200px;text-align:center;top:649px;font-size:10.20px;color:#303030;">42</div>
<div class="t" style="left:1110.88px;width:200px;text-align:center;top:649px;font-size:10.20px;color:#303030;">49</div>
<div class="t" style="left:1153.72px;width:200px;text-align:center;top:649px;font-size:10.20px;color:#303030;">56</div>
<div class="t" style="left:956.60px;top:695px;font-size:11.22px;color:#303030;">Standard deviation of the voltage with time change</div>
<div class="t" style="left:432.40px;top:826px;font-size:7.99px;color:#8a8a8a;">Data Last Updated: 6/18/2022 2:20:01 PM</div>
<div class="t" style="left:1845.00px;top:98px;font-size:13.60px;color:#202124;">Chart</div>
<div class="t" style="left:1954.00px;top:98px;font-size:13.60px;color:#202124;">Data</div>
<div class="t" style="left:1808.00px;top:134px;font-size:9.60px;color:#1b68e2;">SETUP</div>
<div class="t" style="left:1873.00px;top:134px;font-size:9.47px;color:#5f6368;">STYLE</div>
<div class="t" style="left:1797.20px;top:167px;font-size:8.76px;color:#63686d;">Data source</div>
<div class="t" style="left:1822.00px;top:188px;font-size:8.60px;color:#2a2c2f;">TDengine</div>
<div class="t" style="left:1819.00px;top:210px;font-size:8.03px;color:#2f78e8;font-weight:bold;">BLEND DATA</div>
<div class="t" style="left:1798.00px;top:254px;font-size:8.76px;color:#63686d;">Dimension</div>
<div class="t" style="left:1822.00px;top:277px;font-size:8.80px;color:#111214;">ts</div>
<div class="t" style="left:1822.00px;top:299px;font-size:8.80px;color:#111214;">groupid</div>
<div class="t" style="left:1822.00px;top:322px;font-size:8.80px;color:#111214;">voltage</div>
<div class="t" style="left:1822.00px;top:344px;font-size:8.80px;color:#111214;">phase</div>
<div class="t" style="left:1822.00px;top:367px;font-size:8.80px;color:#111214;">location</div>
<div class="t" style="left:1801.60px;top:300px;font-size:7.40px;color:#111;font-weight:bold;">123</div>
<div class="t" style="left:1801.60px;top:323px;font-size:7.40px;color:#111;font-weight:bold;">123</div>
<div class="t" style="left:1801.60px;top:345px;font-size:7.40px;color:#111;font-weight:bold;">123</div>
<div class="t" style="left:1801.00px;top:367px;font-size:6.20px;color:#111;font-weight:bold;">ABC</div>
<div class="t" style="left:1822.00px;top:389px;font-size:8.84px;color:#505050;">Add dimension</div>
<div class="t" style="left:1822.00px;top:487px;font-size:8.84px;color:#505050;">Add metric</div>
<div class="t" style="left:1822.00px;top:887px;font-size:8.84px;color:#505050;">Add sort</div>
<div class="t" style="left:1797.20px;top:417px;font-size:8.76px;color:#63686d;">Drill down</div>
<div class="t" style="left:1798.00px;top:463px;font-size:8.76px;color:#63686d;">Metric</div>
<div class="t" style="left:1797.20px;top:515px;font-size:8.76px;color:#63686d;">Optional metrics</div>
<div class="t" style="left:1798.00px;top:542px;font-size:8.76px;color:#63686d;">Metric sliders</div>
<div class="t" style="left:1798.00px;top:587px;font-size:8.76px;color:#63686d;">Rows per Page</div>
<div class="t" style="left:1819.00px;top:611px;font-size:8.39px;color:#ababab;">100</div>
<div class="t" style="left:1798.00px;top:657px;font-size:8.76px;color:#63686d;">Summary row</div>
<div class="t" style="left:1821.00px;top:685px;font-size:8.76px;color:#9b9ea2;">Show summary row</div>
<div class="t" style="left:1798.00px;top:729px;font-size:8.76px;color:#63686d;">Sort</div>
<div class="t" style="left:1822.00px;top:753px;font-size:8.80px;color:#111214;">ts</div>
<div class="t" style="left:1821.00px;top:783px;font-size:8.76px;color:#9b9ea2;">Descending</div>
<div class="t" style="left:1821.00px;top:816px;font-size:8.76px;color:#9b9ea2;">Ascending</div>
<div class="t" style="left:1798.00px;top:863px;font-size:8.76px;color:#63686d;">Secondary sort</div>
<div class="t" style="left:1821.00px;top:917px;font-size:8.76px;color:#9b9ea2;">Descending</div>
<div class="t" style="left:1821.00px;top:949px;font-size:8.76px;color:#9b9ea2;">Ascending</div>
<div class="t" style="left:1796.60px;top:996px;font-size:8.76px;color:#63686d;">Default date range</div>
<div class="t" style="left:1821.00px;top:1021px;font-size:8.76px;color:#9b9ea2;">Auto</div>
<div class="t" style="left:1946.00px;top:137px;font-size:9.47px;color:#6c7176;">Search</div>
<div class="t" style="left:1946.00px;top:171px;font-size:9.00px;color:#2a2c2f;">TDengine</div>
<div class="t" style="left:1952.00px;top:195px;font-size:9.00px;color:#26282b;">current</div>
<div class="t" style="left:1952.00px;top:212px;font-size:9.00px;color:#26282b;">groupid</div>
<div class="t" style="left:1952.00px;top:230px;font-size:9.00px;color:#26282b;">location</div>
<div class="t" style="left:1952.00px;top:248px;font-size:9.00px;color:#26282b;">phase</div>
<div class="t" style="left:1952.00px;top:265px;font-size:9.00px;color:#26282b;">ts</div>
<div class="t" style="left:1952.00px;top:283px;font-size:9.00px;color:#26282b;">voltage</div>
<div class="t" style="left:1930.80px;top:195px;font-size:6.71px;color:#66bb6a;font-weight:bold;">123</div>
<div class="t" style="left:1930.80px;top:213px;font-size:6.71px;color:#66bb6a;font-weight:bold;">123</div>
<div class="t" style="left:1930.80px;top:248px;font-size:6.71px;color:#66bb6a;font-weight:bold;">123</div>
<div class="t" style="left:1930.80px;top:284px;font-size:6.71px;color:#66bb6a;font-weight:bold;">123</div>
<div class="t" style="left:1930.40px;top:230px;font-size:5.80px;color:#66bb6a;font-weight:bold;">ABC</div>
<div class="t" style="left:1952.00px;top:305px;font-size:9.60px;color:#2f78e8;">Add a field</div>
<div class="t" style="left:1952.00px;top:325px;font-size:9.60px;color:#2f78e8;">Add a parameter</div>
<div class="t" style="left:1950.00px;top:1039px;font-size:9.11px;color:#2f78e8;font-weight:bold;">Add Data</div>
</div></body></html>
